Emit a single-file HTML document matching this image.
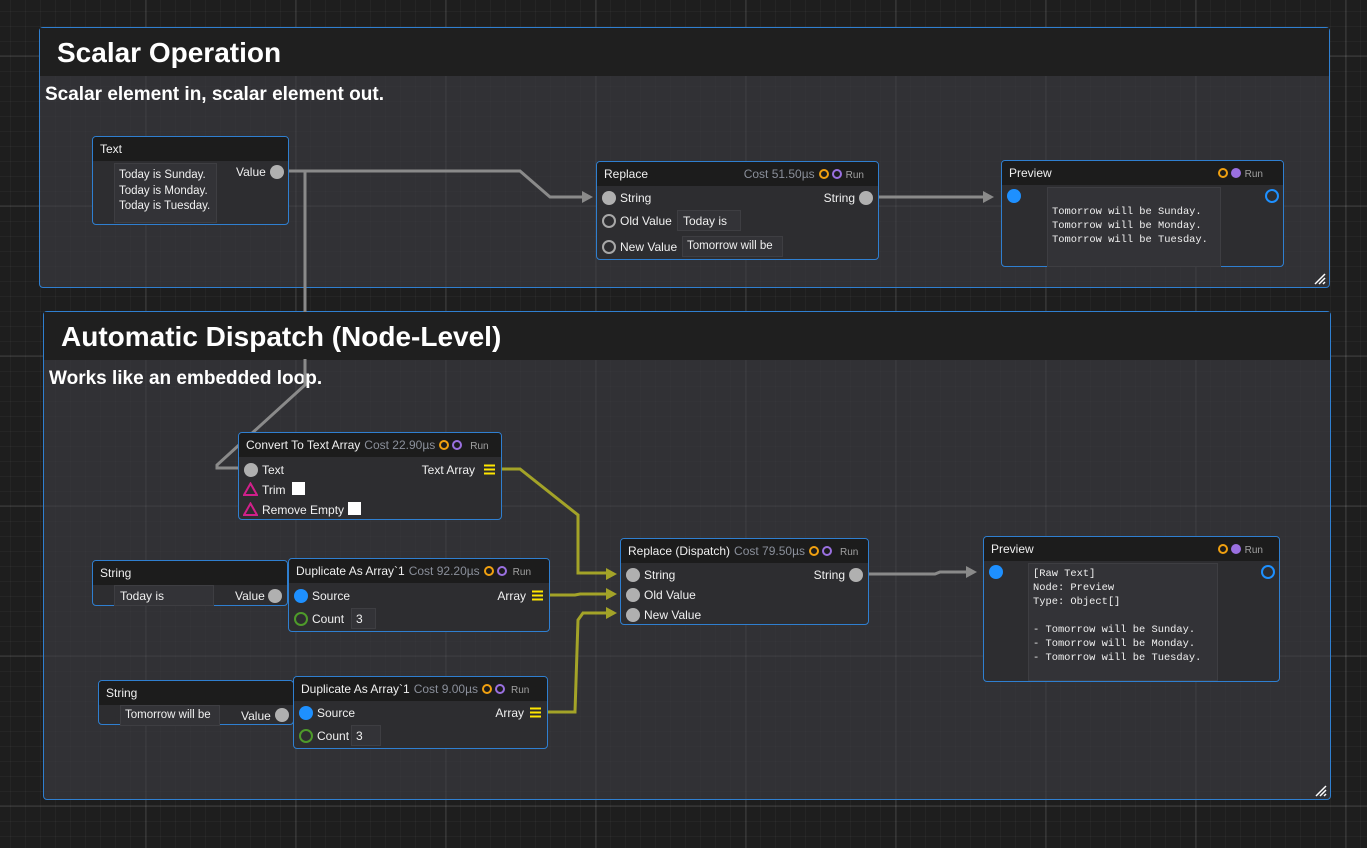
<!DOCTYPE html>
<html><head><meta charset="utf-8"><style>
*{box-sizing:border-box;margin:0;padding:0}
body{width:1367px;height:848px;overflow:hidden;position:relative;font-family:"Liberation Sans","DejaVu Sans",sans-serif;font-size:12px;color:#f0f0f0;
background-color:#1e1e1e;
background-image:
linear-gradient(90deg,rgba(255,255,255,0.07) 0 2px,transparent 2px),
linear-gradient(0deg,rgba(255,255,255,0.07) 0 2px,transparent 2px),
linear-gradient(90deg,rgba(255,255,255,0.03) 0 1px,transparent 1px),
linear-gradient(0deg,rgba(255,255,255,0.03) 0 1px,transparent 1px);
background-size:150px 150px,150px 150px,15px 15px,15px 15px;
background-position:145px 0,0 57px,10px 0,0 12px;}
.grp{position:absolute;border:1px solid #2f7fd0;border-radius:4px;background:rgba(62,62,68,0.6)}
.hd{height:48px;background:#1f1f1f;font-weight:bold;font-size:28px;padding-left:17px;line-height:50px;color:#fff;white-space:nowrap}
.grp .sub{font-weight:bold;font-size:19px;color:#fff;padding:8px 0 0 5px;white-space:nowrap}
.grip{position:absolute;right:2px;bottom:2px;width:14px;height:12px}
.node{position:absolute;border:1px solid #2f7fd0;border-radius:4px;background:#2d2d30}
.nh{height:24px;background:#1c1c1c;line-height:24px;padding-left:7px;white-space:nowrap;border-radius:3px 3px 0 0;position:relative}
.cost{color:#8a8f9a;margin-left:4px}
.run{color:#a0a0a0;font-size:10px;margin-left:4px}
.a{position:absolute;white-space:nowrap}
.p{position:absolute;width:14px;height:14px;border-radius:50%;background:#b0b0b0}
.h{position:absolute;width:14px;height:14px;border-radius:50%;border:2px solid #a8a8a8}
.ro{display:inline-block;width:10px;height:10px;border-radius:50%;border:2px solid #f0a010;vertical-align:-1px;margin-left:4px}
.rp{display:inline-block;width:10px;height:10px;border-radius:50%;border:2px solid #9a70e0;vertical-align:-1px;margin-left:3px}
.rpf{display:inline-block;width:10px;height:10px;border-radius:50%;background:#9a70e0;vertical-align:-1px;margin-left:3px}
.box{position:absolute;background:#333337;border:1px solid #3e3e42;white-space:nowrap;overflow:hidden}
.mono{font-family:"Liberation Mono","DejaVu Sans Mono",monospace;font-size:10.4px;line-height:14px}
.chk{position:absolute;width:13px;height:13px;background:#fff}
</style></head><body>

<div class="grp" style="left:39px;top:27px;width:1291px;height:261px"><div class="hd">Scalar Operation</div><div class="sub">Scalar element in, scalar element out.</div>
<svg class="grip" viewBox="0 0 14 12"><path d="M2 11L12 1M6 11L12 5M10 11L12 9" stroke="#fff" stroke-width="1.5"/></svg></div>
<div class="grp" style="left:43px;top:311px;width:1288px;height:489px"><div class="hd">Automatic Dispatch (Node-Level)</div><div class="sub">Works like an embedded loop.</div>
<svg class="grip" viewBox="0 0 14 12"><path d="M2 11L12 1M6 11L12 5M10 11L12 9" stroke="#fff" stroke-width="1.5"/></svg></div>

<svg style="position:absolute;left:0;top:0" width="1367" height="848">
<g fill="none" stroke="#8a8a8a" stroke-width="3">
<path d="M284 171H520L550 197H588"/>
<path d="M300 171H305V385L217 465V468H240"/>
<path d="M874 197H985"/>
<path d="M862 574H935L940 572H968"/>
</g>
<g fill="#8a8a8a"><path d="M582 191L593 197L582 203Z"/><path d="M983 191L994 197L983 203Z"/><path d="M966 566L977 572L966 578Z"/></g>
<g fill="none" stroke="#a3a328" stroke-width="3">
<path d="M497 469H520L578 515V573H608"/>
<path d="M545 595H575L580 594H608"/>
<path d="M545 712H575L578 620L583 613H608"/>
</g>
<g fill="#a3a328"><path d="M606 568L617 574L606 580Z"/><path d="M606 588L617 594L606 600Z"/><path d="M606 607L617 613L606 619Z"/></g>
</svg>
<div class="hd" style="position:absolute;left:44px;top:312px;width:1286px;height:47px">Automatic Dispatch (Node-Level)</div>

<!-- Text node -->
<div class="node" style="left:92px;top:136px;width:197px;height:89px"><div class="nh">Text</div>
<div class="box" style="left:21px;top:26px;width:103px;height:60px;padding:4px 4px;line-height:15.5px;font-size:11.5px">Today is Sunday.<br>Today is Monday.<br>Today is Tuesday.</div>
<div class="a" style="left:143px;top:28px">Value</div><div class="p" style="left:177px;top:28px"></div></div>

<!-- Replace -->
<div class="node" style="left:596px;top:161px;width:283px;height:99px"><div class="nh">Replace<span class="a" style="right:14px"><span class="cost">Cost 51.50µs</span><span class="ro"></span><span class="rp"></span><span class="run">Run</span></span></div>
<div class="p" style="left:5px;top:29px"></div><div class="a" style="left:23px;top:29px">String</div>
<div class="a" style="right:23px;top:29px">String</div><div class="p" style="right:5px;top:29px"></div>
<div class="h" style="left:5px;top:52px"></div><div class="a" style="left:23px;top:52px">Old Value</div>
<div class="box" style="left:80px;top:48px;width:64px;height:21px;padding:3px 5px">Today is</div>
<div class="h" style="left:5px;top:78px"></div><div class="a" style="left:23px;top:78px">New Value</div>
<div class="box" style="left:85px;top:74px;width:101px;height:21px;padding:3px 4px;font-size:11.5px">Tomorrow will be</div></div>

<!-- Preview 1 -->
<div class="node" style="left:1001px;top:160px;width:283px;height:107px"><div class="nh">Preview<span class="a" style="right:20px"><span class="ro"></span><span class="rpf"></span><span class="run">Run</span></span></div>
<div class="p" style="left:5px;top:28px;background:#1e90ff"></div><div class="h" style="right:4px;top:28px;border-color:#1e90ff"></div>
<div class="box mono" style="left:45px;top:26px;width:174px;height:80px;padding:17px 4px 0 4px">Tomorrow will be Sunday.<br>Tomorrow will be Monday.<br>Tomorrow will be Tuesday.</div></div>

<!-- Convert -->
<div class="node" style="left:238px;top:432px;width:264px;height:88px"><div class="nh">Convert To Text Array<span class="cost">Cost 22.90µs</span><span class="ro"></span><span class="rp"></span><span class="run" style="margin-left:8px">Run</span></div>
<div class="p" style="left:5px;top:30px"></div><div class="a" style="left:23px;top:30px">Text</div>
<div class="a" style="right:26px;top:30px">Text Array</div>
<svg class="a" style="right:6px;top:31px" width="11" height="11"><path d="M0 1.5H11M0 5.5H11M0 9.5H11" stroke="#ffe600" stroke-width="2"/></svg>
<svg class="a" style="left:4px;top:49px" width="15" height="14"><path d="M7.5 1.5L14 13H1Z" fill="none" stroke="#d0208a" stroke-width="2"/></svg><div class="a" style="left:23px;top:50px">Trim</div><div class="chk" style="left:53px;top:49px"></div>
<svg class="a" style="left:4px;top:69px" width="15" height="14"><path d="M7.5 1.5L14 13H1Z" fill="none" stroke="#d0208a" stroke-width="2"/></svg><div class="a" style="left:23px;top:70px">Remove Empty</div><div class="chk" style="left:109px;top:69px"></div></div>

<!-- String 1 -->
<div class="node" style="left:92px;top:560px;width:196px;height:46px"><div class="nh">String</div>
<div class="box" style="left:21px;top:24px;width:100px;height:21px;padding:3px 5px">Today is</div>
<div class="a" style="left:142px;top:28px">Value</div><div class="p" style="left:175px;top:28px"></div></div>

<!-- Dup 1 -->
<div class="node" style="left:288px;top:558px;width:262px;height:74px"><div class="nh">Duplicate As Array`1<span class="cost">Cost 92.20µs</span><span class="ro"></span><span class="rp"></span><span class="run" style="margin-left:6px">Run</span></div>
<div class="p" style="left:5px;top:30px;background:#1e90ff"></div><div class="a" style="left:23px;top:30px">Source</div>
<div class="a" style="right:23px;top:30px">Array</div>
<svg class="a" style="right:6px;top:31px" width="11" height="11"><path d="M0 1.5H11M0 5.5H11M0 9.5H11" stroke="#ffe600" stroke-width="2"/></svg>
<div class="h" style="left:5px;top:53px;border-color:#4e9a2a"></div><div class="a" style="left:23px;top:53px">Count</div>
<div class="box" style="left:62px;top:49px;width:25px;height:21px;padding:3px 4px">3</div></div>

<!-- String 2 -->
<div class="node" style="left:98px;top:680px;width:196px;height:45px"><div class="nh">String</div>
<div class="box" style="left:21px;top:24px;width:100px;height:21px;padding:3px 4px;font-size:11.5px">Tomorrow will be</div>
<div class="a" style="left:142px;top:28px">Value</div><div class="p" style="left:176px;top:27px"></div></div>

<!-- Dup 2 -->
<div class="node" style="left:293px;top:676px;width:255px;height:73px"><div class="nh">Duplicate As Array`1<span class="cost">Cost 9.00µs</span><span class="ro"></span><span class="rp"></span><span class="run" style="margin-left:6px">Run</span></div>
<div class="p" style="left:5px;top:29px;background:#1e90ff"></div><div class="a" style="left:23px;top:29px">Source</div>
<div class="a" style="right:23px;top:29px">Array</div>
<svg class="a" style="right:6px;top:30px" width="11" height="11"><path d="M0 1.5H11M0 5.5H11M0 9.5H11" stroke="#ffe600" stroke-width="2"/></svg>
<div class="h" style="left:5px;top:52px;border-color:#4e9a2a"></div><div class="a" style="left:23px;top:52px">Count</div>
<div class="box" style="left:57px;top:48px;width:30px;height:21px;padding:3px 4px">3</div></div>

<!-- Replace dispatch -->
<div class="node" style="left:620px;top:538px;width:249px;height:87px"><div class="nh">Replace (Dispatch)<span class="cost">Cost 79.50µs</span><span class="ro"></span><span class="rp"></span><span class="run" style="margin-left:8px">Run</span></div>
<div class="p" style="left:5px;top:29px"></div><div class="a" style="left:23px;top:29px">String</div>
<div class="a" style="right:23px;top:29px">String</div><div class="p" style="right:5px;top:29px"></div>
<div class="p" style="left:5px;top:49px"></div><div class="a" style="left:23px;top:49px">Old Value</div>
<div class="p" style="left:5px;top:69px"></div><div class="a" style="left:23px;top:69px">New Value</div></div>

<!-- Preview 2 -->
<div class="node" style="left:983px;top:536px;width:297px;height:146px"><div class="nh">Preview<span class="a" style="right:16px"><span class="ro"></span><span class="rpf"></span><span class="run">Run</span></span></div>
<div class="p" style="left:5px;top:28px;background:#1e90ff"></div><div class="h" style="right:4px;top:28px;border-color:#1e90ff"></div>
<div class="box mono" style="left:44px;top:26px;width:190px;height:118px;padding:3px 4px">[Raw Text]<br>Node: Preview<br>Type: Object[]<br><br>- Tomorrow will be Sunday.<br>- Tomorrow will be Monday.<br>- Tomorrow will be Tuesday.</div></div>

</body></html>
